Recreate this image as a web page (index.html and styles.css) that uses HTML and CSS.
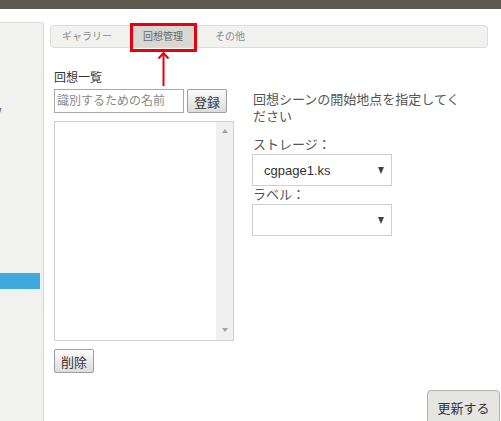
FILE: index.html
```html
<!DOCTYPE html>
<html lang="ja">
<head>
<meta charset="utf-8">
<title>回想管理</title>
<link rel="stylesheet" href="styles.css">
</head>
<body>
<div class="topbar"></div>
<div class="main">
  <aside class="sidebar">
    <div class="side-item"><span class="side-cut">バック</span></div>
    <div class="side-active"></div>
  </aside>
  <div class="content">
    <div class="tabs">
      <div class="tab">ギャラリー</div>
      <div class="tab active">回想管理
        <span class="mark"></span>
        <svg class="arrow" width="13" height="35" viewBox="0 0 13 35"><path d="M6.5 2 V35" stroke="#e8000b" stroke-width="2" fill="none"/><path d="M1.5 7.5 L6.5 2 L11.5 7.5" stroke="#e8000b" stroke-width="2" fill="none"/></svg>
      </div>
      <div class="tab">その他</div>
    </div>
    <div class="panel">
      <div class="col-left">
        <div class="label">回想一覧</div>
        <div class="row">
          <input class="name-input" type="text" placeholder="識別するための名前">
          <button class="btn">登録</button>
        </div>
        <div class="listbox">
          <div class="list-area"></div>
          <div class="scrollbar"><span class="sb-up"></span><span class="sb-down"></span></div>
        </div>
        <button class="btn btn-del">削除</button>
      </div>
      <div class="col-right">
        <p class="desc">回想シーンの開始地点を指定してください</p>
        <div class="field-label first">ストレージ：</div>
        <div class="select"><span>cgpage1.ks</span><span class="caret"></span></div>
        <div class="field-label">ラベル：</div>
        <div class="select"><span></span><span class="caret"></span></div>
      </div>
    </div>
    <div class="footer"><button class="btn-update">更新する</button></div>
  </div>
</div>
</body>
</html>
```
FILE: styles.css
```css
* { box-sizing: border-box; }
html, body { margin: 0; padding: 0; }
body {
  font-family: "Liberation Sans", "Noto Sans CJK JP", sans-serif;
  color: #333;
  background: #fff;
  overflow: hidden;
}
.topbar { height: 9px; background: #5d594f; }
.main { display: flex; min-height: calc(100vh - 9px); }
.sidebar {
  width: 44px;
  flex: none;
  margin-top: 13px;
  background: #f1f1ef;
  border-top: 1px solid #dcdcdc;
  border-right: 1px solid #d6d6d4;
  border-top-right-radius: 3px;
  overflow: hidden;
  display: flex;
  flex-direction: column;
}
.side-item {
  margin-top: 83px;
  height: 14px;
  font-size: 12px;
  line-height: 14px;
  color: #666;
  white-space: nowrap;
}
.side-cut { display: inline-block; margin-left: -33px; }
.side-active {
  margin-top: 153px;
  width: 40px;
  height: 16px;
  background: #3fa9dc;
}
.content { flex: 1; padding: 16px 1px 0 6px; display: flex; flex-direction: column; }
.tabs {
  height: 23px;
  margin-right: 12px;
  border: 1px solid #dcdcdc;
  border-radius: 4px;
  background: #f1f1f0;
  display: flex;
  gap: 11px;
  padding-left: 1px;
}
.tab {
  position: relative;
  padding: 0 10px;
  font-size: 10px;
  line-height: 21px;
  color: #8a8a8a;
}
.tab.active { background: #d8d7d2; color: #666; padding: 0 10px 0 10px; width: 61px; }
.mark {
  position: absolute;
  left: -3px; right: -3px; top: -3px; bottom: -5px;
  border: 3px solid #e8000b;
}
.arrow { position: absolute; left: 24px; top: 25px; }
.panel { display: flex; gap: 19px; margin-top: 22px; padding-left: 4px; }
.col-left { width: 180px; flex: none; display: flex; flex-direction: column; align-items: flex-start; }
.label { font-size: 12px; line-height: 16px; height: 19px; color: #333; }
.row { display: flex; gap: 3px; }
.name-input {
  width: 130px; height: 24px;
  border: 1px solid #a9a9a9;
  padding: 0 2px;
  font-family: "Liberation Sans", "Noto Sans CJK JP", sans-serif;
  font-size: 12px;
  color: #333;
  outline: none;
}
.name-input::placeholder { color: #8a8a8a; }
.btn {
  width: 40px; height: 24px;
  border: 1px solid #9e9e9e;
  border-radius: 2px;
  background: linear-gradient(#fbfbfb, #dcdcdc);
  font-family: "Liberation Sans", "Noto Sans CJK JP", sans-serif;
  font-size: 13px;
  color: #333;
  padding: 0;
}
.listbox {
  margin-top: 8px;
  width: 180px; height: 220px;
  border: 1px solid #cfcfcf;
  display: flex;
}
.list-area { flex: 1; background: #fff; }
.scrollbar {
  width: 17px;
  background: #f0f0f0;
  display: flex;
  flex-direction: column;
  justify-content: space-between;
  align-items: center;
  padding: 7px 0 8px;
}
.sb-up, .sb-down { width: 0; height: 0; border-left: 3.5px solid transparent; border-right: 3.5px solid transparent; }
.sb-up { border-bottom: 4px solid #a3a3a3; }
.sb-down { border-top: 4px solid #a3a3a3; }
.btn-del { margin-top: 8px; }
.col-right { width: 214px; flex: none; padding-top: 21px; }
.desc { margin: 0; font-size: 13px; line-height: 17px; color: #555; }
.field-label { font-size: 13px; line-height: 18px; color: #555; }
.field-label.first { margin-top: 11px; }
.select {
  margin-left: -1px;
  width: 140px; height: 32px;
  border: 1px solid #cfcfcf;
  display: flex;
  align-items: center;
  justify-content: space-between;
  padding: 0 7px 0 11px;
  font-size: 13px;
  color: #333;
  background: #fff;
}
.caret { width: 0; height: 0; border-left: 3.5px solid transparent; border-right: 3.5px solid transparent; border-top: 7px solid #444; }
.footer { display: flex; justify-content: flex-end; margin-top: 17px; }
.btn-update {
  width: 73px; height: 34px;
  border: 1px solid #b3b3ae;
  border-radius: 4px;
  background: #e5e5e1;
  font-family: "Liberation Sans", "Noto Sans CJK JP", sans-serif;
  font-size: 13px;
  color: #333;
  padding: 0;
}
```
